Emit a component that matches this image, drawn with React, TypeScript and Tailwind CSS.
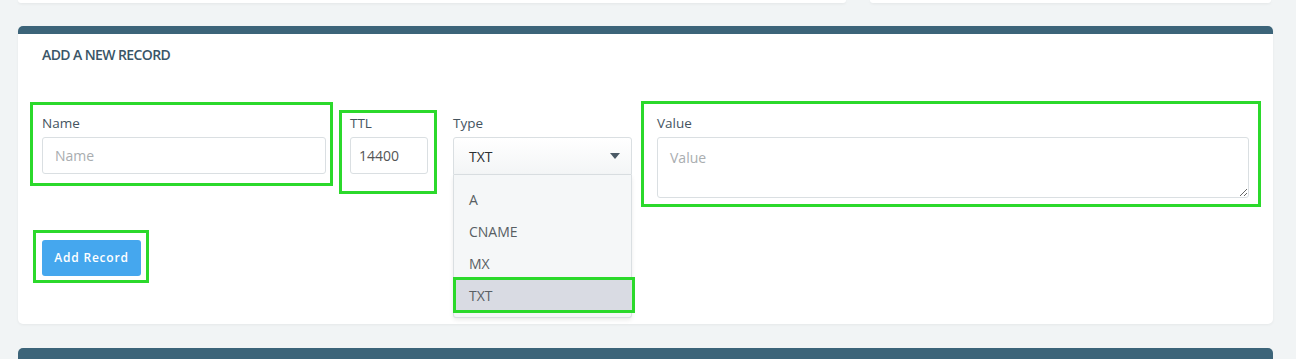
import { ReactNode } from 'react';

// green annotation outline drawn over a form group
const Mark = ({ className }: { className: string }) => (
  <div className={`pointer-events-none absolute border-[3px] border-[#2bd92b] ${className}`} />
);

const Label = ({ children }: { children: ReactNode }) => (
  <label className="block h-[23px] text-[13.5px] leading-[18px] text-[#45545f]">{children}</label>
);

const options = ['A', 'CNAME', 'MX', 'TXT'];

export default function App() {
  return (
    <div
      className="min-h-[359px] bg-[#f1f4f5] pr-[23px] pl-[18px] pb-6"
      style={{ fontFamily: '"Open Sans", "Liberation Sans", sans-serif' }}
    >
      {/* bottoms of the cards above */}
      <div className="flex h-[3px] gap-6">
        <div className="w-[828px] rounded-b bg-white shadow-[0_1px_3px_rgba(0,0,0,0.06)]" />
        <div className="w-[401px] rounded-b bg-white shadow-[0_1px_3px_rgba(0,0,0,0.06)]" />
      </div>

      {/* Add record card */}
      <div className="mt-[23px] rounded-[5px] bg-white shadow-[0_1px_3px_rgba(0,0,0,0.05)]">
        <div className="h-2 rounded-t-[5px] bg-[#3c6479]" />
        <div className="px-6 pt-[12px] pb-[48px]">
          <h3 className="text-[14px] leading-[18px] font-semibold tracking-[-0.6px] text-[#3a5567]">ADD A NEW RECORD</h3>

          <div className="mt-[50px] flex items-start gap-6">
            {/* Name */}
            <div className="relative w-[284px]">
              <Mark className="-top-3 -right-[7px] -bottom-3 -left-3" />
              <Label>Name</Label>
              <input
                placeholder="Name"
                className="h-[37px] w-full rounded-[3px] border border-[#dadfe2] px-3 text-[14px] text-[#555] placeholder:text-[#a9adb0] outline-none"
              />
            </div>

            {/* TTL */}
            <div className="relative w-[78px]">
              <Mark className="-top-1 -right-[9px] -bottom-5 -left-[11px]" />
              <Label>TTL</Label>
              <input
                defaultValue="14400"
                className="h-[37px] w-full rounded-[3px] border border-[#dadfe2] px-2 text-[14px] text-[#555] outline-none"
              />
            </div>

            {/* Type */}
            <div className="relative ml-[1px] w-[179px]">
              <Label>Type</Label>
              <div className="flex h-[38px] items-center justify-between rounded-t-[3px] border border-[#dadfe2] bg-gradient-to-b from-white to-[#f3f5f6] pr-[11px] pl-[15px]">
                <span className="text-[14px] text-[#2b2f33]">TXT</span>
                <svg width="10" height="6" viewBox="0 0 10 6">
                  <path d="M0 0h10L5 6z" fill="#4b5a66" />
                </svg>
              </div>
              <div className="absolute top-full right-0 left-0 z-10 h-[143px] rounded-b-[3px] border border-t-0 border-[#dadfe2] bg-[#f5f7f8] pt-2 shadow-[0_2px_4px_rgba(0,0,0,0.08)]">
                {options.map((o) => (
                  <div
                    key={o}
                    className={`relative flex h-8 items-center pl-[15px] text-[14px] text-[#585e63] ${
                      o === 'TXT' ? 'bg-[#d9dbe3]' : ''
                    }`}
                  >
                    {o}
                    {o === 'TXT' && <Mark className="-top-[2px] -right-[4px] -bottom-[2px] -left-[1px]" />}
                  </div>
                ))}
              </div>
            </div>

            {/* Value */}
            <div className="relative ml-[1px] flex-1">
              <Mark className="-top-[13px] -right-3 -bottom-[9px] -left-4" />
              <Label>Value</Label>
              <textarea
                placeholder="Value"
                className="block h-[61px] w-full rounded-[3px] border border-[#dadfe2] px-3 py-[9px] text-[14px] text-[#555] placeholder:text-[#a9adb0] outline-none"
              />
            </div>
          </div>

          <div className="relative mt-[42px] inline-block">
            <Mark className="-top-[10px] -right-2 -bottom-[7px] -left-[9px]" />
            <button className="h-9 w-[99px] rounded-[3px] bg-[#45a7ee] text-[12px] font-semibold tracking-[0.8px] text-white">
              Add Record
            </button>
          </div>
        </div>
      </div>

      {/* next card */}
      <div className="mt-6 h-10 rounded-t-[5px] bg-[#3c6479]" />
    </div>
  );
}
